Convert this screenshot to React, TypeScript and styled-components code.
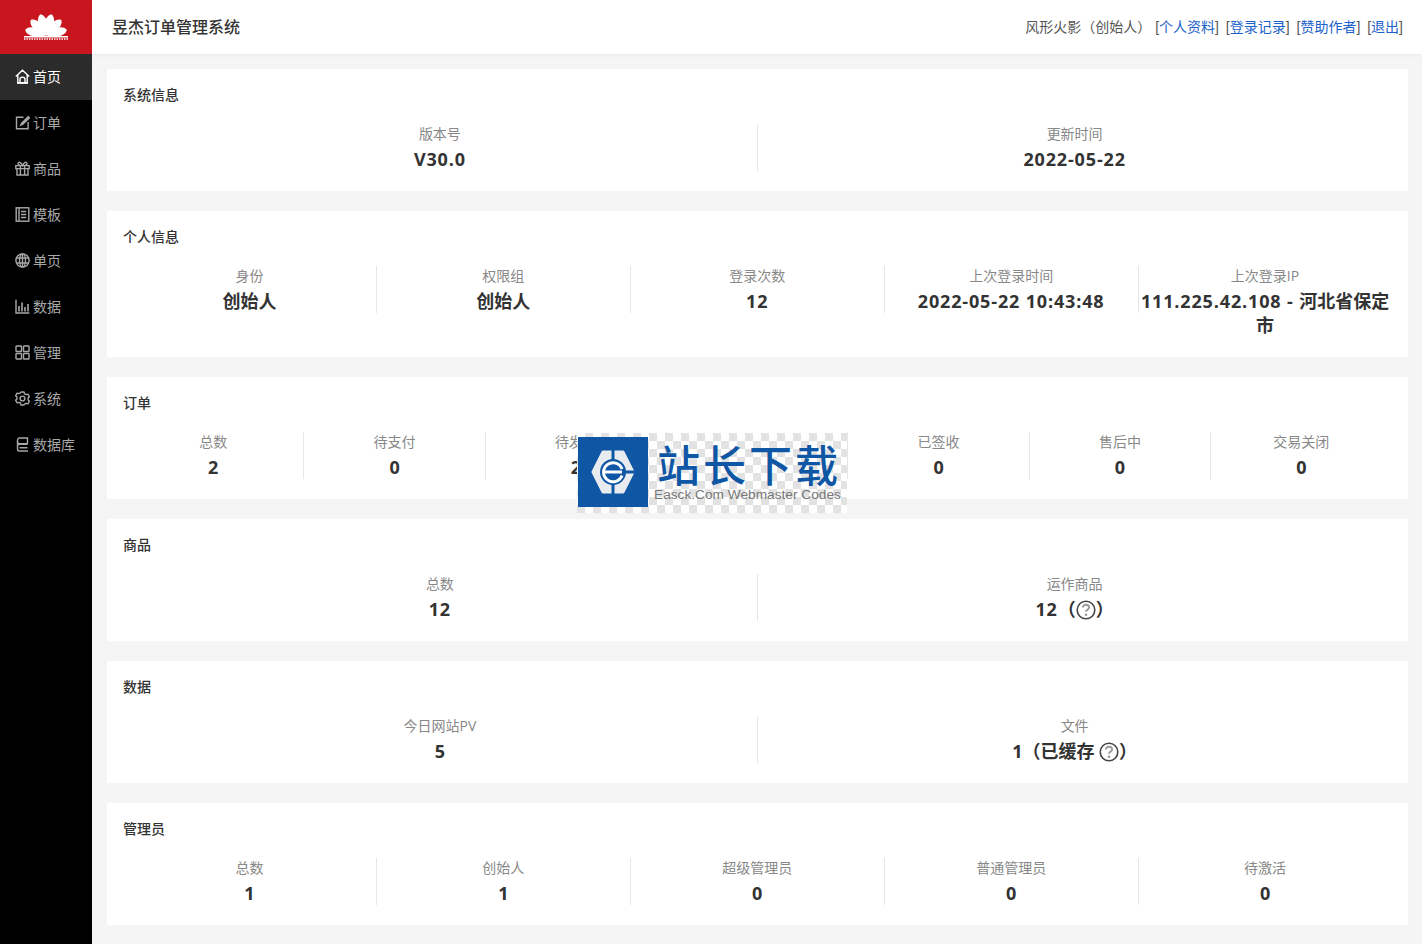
import React from "react";
import styled, { createGlobalStyle } from "styled-components";

const Global = createGlobalStyle`
  html, body { margin: 0; padding: 0; background: #f5f5f5; }
  body { font-family: "Open Sans", "Noto Sans CJK SC", sans-serif; color: #333; }
  * { box-sizing: border-box; }
`;

const Page = styled.div`
  position: relative;
  display: flex;
  width: 1422px;
  height: 944px;
  overflow: hidden;
`;
const Sidebar = styled.aside`
  width: 92px;
  flex: none;
  background: #000;
`;
const Brand = styled.div`
  height: 54px;
  background: #c9151e;
  display: flex;
  align-items: center;
  justify-content: center;
`;
const NavItem = styled.div<{ $active?: boolean }>`
  height: 46px;
  display: flex;
  align-items: center;
  gap: 3px;
  padding: 0 0 2px 15px;
  font-size: 14px;
  color: ${(p) => (p.$active ? "#fff" : "#a8a8a8")};
  background: ${(p) => (p.$active ? "#2b2b2b" : "transparent")};
  svg { flex: none; margin-top: 1px; }
`;
const Main = styled.div`
  flex: 1;
  min-width: 0;
  display: flex;
  flex-direction: column;
`;
const Header = styled.header`
  height: 54px;
  flex: none;
  background: #fff;
  display: flex;
  align-items: center;
  justify-content: space-between;
  padding: 0 19px 2px 20px;
  box-shadow: 0 1px 4px rgba(0, 0, 0, 0.06);
`;
const Title = styled.div`
  font-size: 16px;
  font-weight: 500;
  color: #333;
`;
const UserBar = styled.div`
  font-family: "Liberation Sans", "Noto Sans CJK SC", sans-serif;
  font-size: 14px;
  color: #555;
  word-spacing: 3px;
  white-space: pre;
`;
const UserName = styled.span`
  margin-right: -3px;
`;
const Link = styled.a`
  color: #1c62c9;
`;
const Content = styled.main`
  flex: 1;
  padding: 15px 14px 0 15px;
  display: flex;
  flex-direction: column;
  gap: 20px;
`;
const Card = styled.section`
  background: #fff;
  padding: 16px 16px 20px;
`;
const CardTitle = styled.h2`
  margin: 0 0 18px;
  font-size: 14px;
  line-height: 20px;
  font-weight: 500;
  color: #333;
`;
const StatGrid = styled.div<{ $cols: number }>`
  display: grid;
  margin-left: -0.5px;
  grid-template-columns: repeat(${(p) => p.$cols}, 1fr);
`;
const Stat = styled.div`
  position: relative;
  min-width: 0;
  text-align: center;
  padding: 0 2px;
  &:not(:first-child)::before {
    content: "";
    position: absolute;
    left: -0.5px;
    top: 1px;
    width: 1px;
    height: 47px;
    background: #e6e6e6;
  }
`;
const StatLabel = styled.div`
  font-size: 14px;
  line-height: 22px;
  color: #888;
`;
const StatValue = styled.div`
  margin-top: 2px;
  font-size: 18px;
  font-weight: 700;
  line-height: 24px;
  color: #333;
  svg { vertical-align: -4px; }
`;
const Num = styled.span`
  letter-spacing: 0.85px;
`;
const Watermark = styled.div`
  position: absolute;
  left: 577px;
  top: 433px;
  width: 270px;
  height: 80px;
  padding: 4px 0 0 1px;
  display: flex;
  gap: 6px;
  background-color: #fff;
  background-image: conic-gradient(#e2e2e2 25%, #fff 0 50%, #e2e2e2 0 75%, #fff 0);
  background-size: 16px 16px;
`;
const WatermarkLogo = styled.div`
  width: 70px;
  height: 70px;
  flex: none;
  background: #0f57a5;
  display: flex;
  align-items: center;
  justify-content: center;
`;
const WatermarkText = styled.div`
  display: flex;
  flex-direction: column;
`;
const WatermarkName = styled.div`
  font-family: "Noto Sans CJK SC", sans-serif;
  font-size: 43px;
  font-weight: 500;
  letter-spacing: 3px;
  line-height: 47px;
  margin-top: 3px;
  margin-left: 3px;
  color: #0f57a5;
  white-space: nowrap;
`;
const WatermarkSub = styled.div`
  font-family: "Liberation Sans", sans-serif;
  font-size: 13.7px;
  line-height: 16px;
  color: #777;
  white-space: nowrap;
`;

const Fan = () => (
  <svg width="46" height="28" viewBox="0 0 46 28" fill="#fff">
    {[-76, -45, -15, 15, 45, 76].map((a) => (
      <path
        key={a}
        d="M23 22C18.5 16 16 4 23 0.5C30 4 27.5 16 23 22Z"
        transform={`rotate(${a} 23 22)`}
      />
    ))}
    <path d="M15 22.5a8 8 0 0 1 16 0z" />
    <rect x="1" y="23" width="44" height="1.5" />
    <path d="M1 26h44" stroke="#fff" strokeWidth="1.6" strokeDasharray="1.5 1" fill="none" />
  </svg>
);
const ico = { width: 15, height: 15, viewBox: "0 0 15 15", fill: "none", stroke: "currentColor", strokeWidth: 1.4 };
const HomeIcon = () => (
  <svg {...ico}>
    <path d="M.8 7.4 7.5 1.2l6.7 6.2M2.8 6v8h9.4V6M5 14v-3.4a2.5 2.5 0 0 1 5 0V14" />
    <path d="M2 13.8h11" strokeWidth="1.7" />
  </svg>
);
const EditIcon = () => (
  <svg {...ico}>
    <path d="M8.5 2.2H1.5v11.6h11.6V7" />
    <path d="M13.8 1.2 6.8 8.2 6 10l1.8-.8 7-7" strokeWidth="1.6" />
  </svg>
);
const GiftIcon = () => (
  <svg {...ico}>
    <path d="M.8 4.6h13.4v3H.8zM2 7.6V14h11V7.6M5.4 4.6V14M9.6 4.6V14" />
    <path d="M5.5 4.4C3.5 4.4 3 3.5 3 2.6 3 1.6 4 1 4.9 1.4c1 .5 2 1.8 2.6 3 .6-1.2 1.6-2.5 2.6-3C11 1 12 1.6 12 2.6c0 .9-.5 1.8-2.5 1.8" />
  </svg>
);
const TemplateIcon = () => (
  <svg {...ico}>
    <rect x="1.2" y=".8" width="12.6" height="13.4" />
    <path d="M4 .8v13.4M6 4.5h5.2M6 7.5h5.2M6 10.5h5.2" />
  </svg>
);
const GlobeIcon = () => (
  <svg {...ico}>
    <circle cx="7.5" cy="7.5" r="6.6" />
    <ellipse cx="7.5" cy="7.5" rx="3" ry="6.6" />
    <path d="M7.5 1v13M1.5 5h12M1.5 10h12" />
  </svg>
);
const ChartIcon = () => (
  <svg {...ico}>
    <path d="M1 .8V14h13.4" />
    <path d="M4 12.5V7M7 12.5V3.5M10 12.5V8M13 12.5V5" strokeWidth="1.6" />
  </svg>
);
const GridIcon = () => (
  <svg {...ico}>
    <rect x="1" y="1" width="5.5" height="5.5" rx=".6" />
    <rect x="8.5" y="1" width="5.5" height="5.5" rx=".6" />
    <rect x="1" y="8.5" width="5.5" height="5.5" rx=".6" />
    <rect x="8.5" y="8.5" width="5.5" height="5.5" rx=".6" />
  </svg>
);
const GearIcon = () => (
  <svg {...ico}>
    <circle cx="7.5" cy="7.5" r="2.4" />
    <path d="M6 1h3l.5 1.8 1.6.9 1.8-.5 1.5 2.6-1.3 1.3v1.8l1.3 1.3-1.5 2.6-1.8-.5-1.6.9L9 14H6l-.5-1.8-1.6-.9-1.8.5L.6 9.2l1.3-1.3V6.1L.6 4.8l1.5-2.6 1.8.5 1.6-.9z" strokeLinejoin="round" />
  </svg>
);
const DbIcon = () => (
  <svg {...ico}>
    <path d="M2.5 3c0-1 1-2 2-2h8v5.6h-8c-1 0-2-.8-2-1.8zM2.5 4.8v7.4c0 1 1 1.8 2 1.8h8.5M2.5 9c0-1 1-1.6 2-1.6h8M4.5 10.8h8" />
  </svg>
);
const Help = () => (
  <svg width="20" height="20" viewBox="0 0 20 20" fill="none">
    <circle cx="10" cy="10" r="8.8" stroke="#444" strokeWidth="1.6" />
    <path d="M6.9 7.6c0-1.8 1.4-2.8 3.1-2.8s3.1 1 3.1 2.6c0 2.3-3.1 2.2-3.1 4.4" stroke="#9a9a9a" strokeWidth="1.9" />
    <circle cx="10" cy="14.8" r="1.3" fill="#9a9a9a" />
  </svg>
);
const EasckLogo = () => (
  <svg width="44" height="44" viewBox="0 0 44 44">
    <path d="M12 2h20l10 20-10 20H12L2 22z" fill="#e8ebf0" stroke="#e8ebf0" strokeWidth="3" strokeLinejoin="round" />
    <circle cx="22" cy="22" r="13" fill="#0f57a5" />
    <path d="M20.5 0h3v10h-3zM20.5 34h3v10h-3zM29 20.5h15v3H29z" fill="#0f57a5" />
    <path d="M31 25.5A9.5 9.5 0 1 1 31 19" fill="none" stroke="#fff" strokeWidth="3" />
    <path d="M14 20.5h17v3H14z" fill="#fff" />
  </svg>
);

const nav: [string, React.ReactNode][] = [
  ["首页", <HomeIcon />],
  ["订单", <EditIcon />],
  ["商品", <GiftIcon />],
  ["模板", <TemplateIcon />],
  ["单页", <GlobeIcon />],
  ["数据", <ChartIcon />],
  ["管理", <GridIcon />],
  ["系统", <GearIcon />],
  ["数据库", <DbIcon />],
];

type Row = { title: string; items: [string, React.ReactNode][] };
const rows: Row[] = [
  { title: "系统信息", items: [["版本号", <Num>V30.0</Num>], ["更新时间", <Num>2022-05-22</Num>]] },
  {
    title: "个人信息",
    items: [
      ["身份", "创始人"],
      ["权限组", "创始人"],
      ["登录次数", <Num>12</Num>],
      ["上次登录时间", <Num>2022-05-22 10:43:48</Num>],
      ["上次登录IP", <><Num>111.225.42.108 - </Num>河北省保定市</>],
    ],
  },
  {
    title: "订单",
    items: [
      ["总数", "2"],
      ["待支付", "0"],
      ["待发货", "2"],
      ["已发货", "0"],
      ["已签收", "0"],
      ["售后中", "0"],
      ["交易关闭", "0"],
    ],
  },
  { title: "商品", items: [["总数", <Num>12</Num>], ["运作商品", <><Num>12</Num>（<Help />）</>]] },
  { title: "数据", items: [["今日网站PV", "5"], ["文件", <>1（已缓存 <Help />）</>]] },
  {
    title: "管理员",
    items: [["总数", "1"], ["创始人", "1"], ["超级管理员", "0"], ["普通管理员", "0"], ["待激活", "0"]],
  },
];

export default function App() {
  return (
    <Page>
      <Global />
      <Sidebar>
        <Brand><Fan /></Brand>
        {nav.map(([label, icon], i) => (
          <NavItem key={label} $active={i === 0}>{icon}{label}</NavItem>
        ))}
      </Sidebar>
      <Main>
        <Header>
          <Title>昱杰订单管理系统</Title>
          <UserBar>
            <UserName>风形火影（创始人）</UserName> [<Link>个人资料</Link>] [<Link>登录记录</Link>] [<Link>赞助作者</Link>] [<Link>退出</Link>]
          </UserBar>
        </Header>
        <Content>
          {rows.map((r) => (
            <Card key={r.title}>
              <CardTitle>{r.title}</CardTitle>
              <StatGrid $cols={r.items.length}>
                {r.items.map(([l, v]) => (
                  <Stat key={l}>
                    <StatLabel>{l}</StatLabel>
                    <StatValue>{v}</StatValue>
                  </Stat>
                ))}
              </StatGrid>
            </Card>
          ))}
        </Content>
      </Main>
      <Watermark>
        <WatermarkLogo><EasckLogo /></WatermarkLogo>
        <WatermarkText>
          <WatermarkName>站长下载</WatermarkName>
          <WatermarkSub>Easck.Com Webmaster Codes</WatermarkSub>
        </WatermarkText>
      </Watermark>
    </Page>
  );
}
